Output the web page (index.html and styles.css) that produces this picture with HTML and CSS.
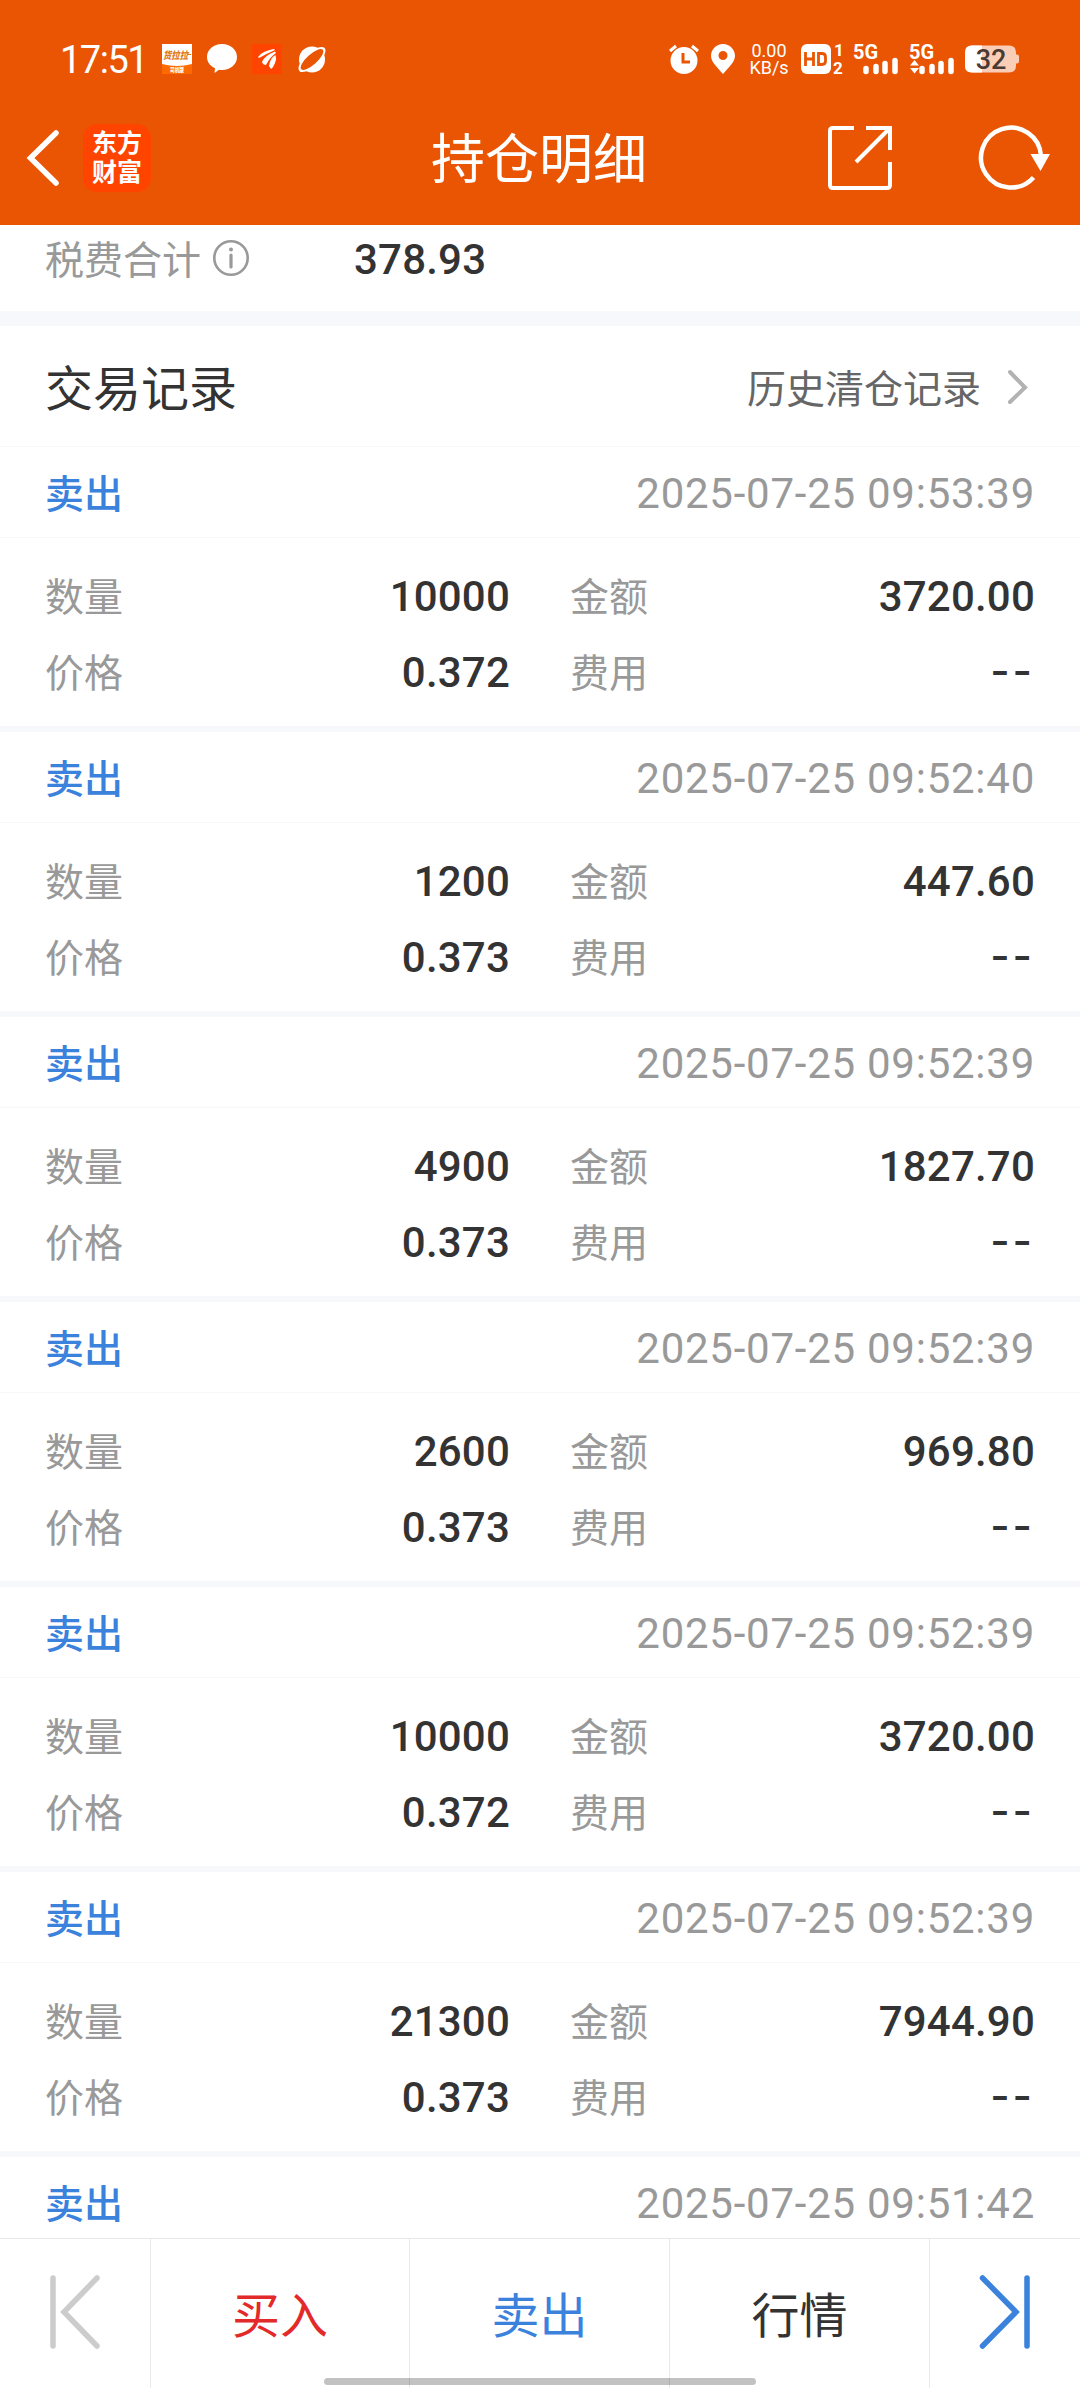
FILE: index.html
```html
<!DOCTYPE html>
<html lang="zh-CN">

<head>

<meta charset="utf-8">
<title>持仓明细</title>

<link rel="stylesheet" href="styles.css">

</head>

<body>

<div class="header">

<div class="status">
  <span class="clock">17:51</span>
  <svg class="app-icon" width="30" height="30" viewBox="0 0 30 30">
    <rect width="30" height="30" fill="#fff"/>
    <path d="M0 20Q15 24 30 20V30H0Z" fill="#ff6a00"/>
    <text x="1" y="15" class="tiny-brand" textLength="25" lengthAdjust="spacingAndGlyphs">货拉拉</text>
    <path d="M25 10.500H29" stroke="#e07a20" stroke-width="1"/>
    <text x="8" y="28" class="tiny-sub" textLength="14" lengthAdjust="spacingAndGlyphs">司机版</text>
  </svg>
  <svg class="app-icon" width="30" height="30" viewBox="0 0 30 30">
    <path d="M15 0C23.500 0 30 5.600 30 13S23.500 26 15 26Q13 26 12 25.700L7.500 29L8 24.200C3.200 22.200 0 18 0 13C0 5.600 6.500 0 15 0Z" fill="#fff"/>
  </svg>
  <svg class="app-icon" width="30" height="30" viewBox="0 0 30 30">
    <rect width="30" height="30" rx="2" fill="#ff4400"/>
    <path d="M6 13Q10 7 22 5L23 6Q14 10 7 14ZM10 18Q12 12 23 7.500L24 9Q18 13 14 21Q11 21 10 18ZM17 22Q18 14 23.500 11Q25 15 23 19Q21 24 19 25Z" fill="#fff"/>
  </svg>
  <svg class="app-icon" width="30" height="30" viewBox="0 0 30 30">
    <circle cx="15" cy="15.500" r="13" fill="#fff"/>
    <ellipse cx="15" cy="15.500" rx="17" ry="7" transform="rotate(-42 15 15.500)" fill="#fff"/>
    <ellipse cx="15" cy="15.500" rx="14.500" ry="5.200" transform="rotate(-42 15 15.500)" fill="#ea5504"/>
  </svg>

  <svg class="alarm" width="30" height="30" viewBox="0 0 30 30">
    <path d="M1 7L7 2M29 7L23 2" stroke="#fff" stroke-width="3"/>
    <circle cx="15" cy="16.500" r="13.500" fill="#fff"/>
    <path d="M14 9V18H21" fill="none" stroke="#ea5504" stroke-width="3"/>
  </svg>
  <svg class="pin" width="24" height="30" viewBox="0 0 24 30">
    <path fill-rule="evenodd" d="M12 0C18.600 0 24 5.200 24 11.800C24 18 18 23 12 30C6 23 0 18 0 11.800C0 5.200 5.400 0 12 0ZM12 7A4.500 4.500 0 1 0 12 16A4.500 4.500 0 1 0 12 7Z" fill="#fff"/>
  </svg>
  <div class="speed"><span>0.00</span><span>KB/s</span></div>
  <svg class="hd" width="43" height="30" viewBox="0 0 43 30">
    <rect width="30" height="30" rx="6" fill="#fff"/>
    <path d="M4.500 8V22M12.500 8V22M4.500 15H12.500M17.500 9.500V20.500H21Q24.500 20.500 24.500 17V13Q24.500 9.500 21 9.500Z" fill="none" stroke="#ea5504" stroke-width="2.800"/>
    <text x="33" y="12" class="sim">1</text>
    <text x="32" y="29.500" class="sim">2</text>
  </svg>
  <svg class="signal" width="46" height="30" viewBox="0 0 46 30">
    <text x="-1" y="14.500" class="net">5G</text>
    <path d="M12 24.500V27.500M22 22.500V27.500M31 19.500V27.500M41 16.500V27.500" stroke="#fff" stroke-width="5.500" stroke-linecap="round"/>
  </svg>
  <svg class="signal" width="46" height="30" viewBox="0 0 46 30">
    <text x="-1" y="14.500" class="net">5G</text>
    <path d="M0 21.500L4.500 16L9 21.500ZM0 24L4.500 29.500L9 24Z" fill="#fff"/>
    <path d="M12 24.500V27.500M22 22.500V27.500M31 19.500V27.500M41 16.500V27.500" stroke="#fff" stroke-width="5.500" stroke-linecap="round"/>
  </svg>
  <svg class="battery" width="55" height="28" viewBox="0 0 55 28">
    <path d="M7 0.500H44Q51 0.500 51 7.500V9.500H52Q54 9.500 54 11.500V16.500Q54 18.500 52 18.500H51V20.500Q51 27.500 44 27.500H7Q0 27.500 0 20.500V7.500Q0 0.500 7 0.500Z" fill="#f9cdb6"/>
    <path d="M7 0.500H17V27.500H7Q0 27.500 0 20.500V7.500Q0 0.500 7 0.500Z" fill="#fff"/>
    <text x="26" y="24" class="charge">32</text>
  </svg>
</div>

<div class="title-bar">
  <div class="title-left">
    <svg width="34" height="56" viewBox="0 0 34 56"><path d="M29 3L3.500 28L29 53" fill="none" stroke="#fff" stroke-width="5.500" stroke-linecap="round"/></svg>
    <div class="logo"><span>东方</span><span>财富</span></div>
  </div>
  <h1>持仓明细</h1>
  <div class="title-right">
    <svg width="64" height="64" viewBox="0 0 64 64" fill="none" stroke="#fff" stroke-width="4">
      <path d="M26 2H5Q2 2 2 5V59Q2 62 5 62H59Q62 62 62 59V36M38 2H62V24M62 2L28 36"/>
    </svg>
    <svg width="72" height="66" viewBox="0 0 72 66">
      <path d="M62 31A30 30 0 1 0 54.500 52.500" fill="none" stroke="#fff" stroke-width="4.500"/>
      <path d="M51.500 29H71L61.500 46Z" fill="#fff"/>
    </svg>
  </div>
</div>

</div>


<div class="summary">
  <span class="label">税费合计</span>
  <svg width="36" height="36" viewBox="0 0 36 36">
    <circle cx="18" cy="18" r="16.700" fill="none" stroke="#999" stroke-width="2.600"/>
    <circle cx="18" cy="9.500" r="2" fill="#999"/>
    <path d="M18 15V27" stroke="#999" stroke-width="3.200" stroke-linecap="round"/>
  </svg>
  <span class="value">378.93</span>
</div>

<div class="section-title">
  <h2>交易记录</h2>
  <span class="history">历史清仓记录</span>
  <svg width="22" height="36" viewBox="0 0 22 36"><path d="M3 4L18 19.500L3 34" fill="none" stroke="#b2b2b2" stroke-width="4" stroke-linecap="round"/></svg>
</div>


<div class="records">

<div class="record">
  <div class="record-head"><span class="side">卖出</span><span class="time">2025-07-25 09:53:39</span></div>
  <div class="record-body">
    <p><span class="label">数量</span><span class="value">10000</span></p>
    <p><span class="label">金额</span><span class="value">3720.00</span></p>
    <p><span class="label">价格</span><span class="value">0.372</span></p>
    <p><span class="label">费用</span><span class="value none">--</span></p>
  </div>
</div>

<div class="record">
  <div class="record-head"><span class="side">卖出</span><span class="time">2025-07-25 09:52:40</span></div>
  <div class="record-body">
    <p><span class="label">数量</span><span class="value">1200</span></p>
    <p><span class="label">金额</span><span class="value">447.60</span></p>
    <p><span class="label">价格</span><span class="value">0.373</span></p>
    <p><span class="label">费用</span><span class="value none">--</span></p>
  </div>
</div>

<div class="record">
  <div class="record-head"><span class="side">卖出</span><span class="time">2025-07-25 09:52:39</span></div>
  <div class="record-body">
    <p><span class="label">数量</span><span class="value">4900</span></p>
    <p><span class="label">金额</span><span class="value">1827.70</span></p>
    <p><span class="label">价格</span><span class="value">0.373</span></p>
    <p><span class="label">费用</span><span class="value none">--</span></p>
  </div>
</div>

<div class="record">
  <div class="record-head"><span class="side">卖出</span><span class="time">2025-07-25 09:52:39</span></div>
  <div class="record-body">
    <p><span class="label">数量</span><span class="value">2600</span></p>
    <p><span class="label">金额</span><span class="value">969.80</span></p>
    <p><span class="label">价格</span><span class="value">0.373</span></p>
    <p><span class="label">费用</span><span class="value none">--</span></p>
  </div>
</div>

<div class="record">
  <div class="record-head"><span class="side">卖出</span><span class="time">2025-07-25 09:52:39</span></div>
  <div class="record-body">
    <p><span class="label">数量</span><span class="value">10000</span></p>
    <p><span class="label">金额</span><span class="value">3720.00</span></p>
    <p><span class="label">价格</span><span class="value">0.372</span></p>
    <p><span class="label">费用</span><span class="value none">--</span></p>
  </div>
</div>

<div class="record">
  <div class="record-head"><span class="side">卖出</span><span class="time">2025-07-25 09:52:39</span></div>
  <div class="record-body">
    <p><span class="label">数量</span><span class="value">21300</span></p>
    <p><span class="label">金额</span><span class="value">7944.90</span></p>
    <p><span class="label">价格</span><span class="value">0.373</span></p>
    <p><span class="label">费用</span><span class="value none">--</span></p>
  </div>
</div>

<div class="record">
  <div class="record-head"><span class="side">卖出</span><span class="time">2025-07-25 09:51:42</span></div>
</div>

</div>


<div class="tabs">
  <div class="tab">
    <svg width="52" height="74" viewBox="0 0 52 74" fill="none" stroke="#ccc" stroke-width="5.500" stroke-linecap="round"><path d="M4 3V71M48 3L15 37L48 71"/></svg>
  </div>
  <div class="tab buy">买入</div>
  <div class="tab sell">卖出</div>
  <div class="tab">行情</div>
  <div class="tab">
    <svg width="52" height="74" viewBox="0 0 52 74" fill="none" stroke="#3a82dc" stroke-width="5.500" stroke-linecap="round"><path d="M48 3V71M3.500 3L37 37L3.500 71"/></svg>
  </div>
  <div class="home-bar"></div>
</div>

</body>

</html>
```

FILE: styles.css
```css
body {
   display: flex;
   flex-direction: column;
   width: 1080px;
   height: 2388px;
   margin: 0;
   overflow: hidden;
   background: #fff;
   color: #333;
   font-family: Roboto, "Noto Sans CJK SC", sans-serif;
   font-size: 39px; }

h1, h2, p {
   margin: 0;
   font-weight: 400; }

svg {
   display: block;
   flex: none;
   overflow: visible; }

.header {
   flex: none;
   height: 225px;
   background: #ea5504;
   color: #fff; }

.status {
   display: flex;
   align-items: center;
   height: 94px;
   padding: 12px 60px 0 60px; }

.clock {
   width: 102px;
   padding-top: 2px;
   font-size: 38px;
   letter-spacing: -1.5px; }

.app-icon {
   margin-right: 15px; }

.tiny-brand {
   font: italic 900 10px "Noto Sans CJK SC", sans-serif;
   fill: #e07a20; }

.tiny-sub {
   font: 900 6px "Noto Sans CJK SC", sans-serif;
   fill: #fff; }

.alarm {
   margin-left: auto; }

.pin {
   margin-left: 12px; }

.speed {
   display: flex;
   flex-direction: column;
   align-items: center;
   width: 38px;
   margin-left: 15px;
   font-size: 18px;
   line-height: 17px; }

.hd {
   margin-left: 13px; }

.sim {
   font: 700 17px Roboto, sans-serif;
   fill: #fff; }

.signal {
   margin-left: 10px; }

.net {
   font: 700 20px Roboto, sans-serif;
   fill: #fff; }

.battery {
   margin-left: 9px; }

.charge {
   font: 500 27px Roboto, sans-serif;
   text-anchor: middle;
   fill: #4a3a34; }

.title-bar {
   display: grid;
   grid-template-columns: 1fr auto 1fr;
   align-items: center;
   height: 66px;
   margin-top: 18px;
   padding: 0 29px 0 27px; }

.title-left, .title-right {
   display: flex;
   align-items: center; }

.title-right {
   justify-content: flex-end;
   gap: 87px; }

.title-bar h1 {
   padding-top: 6px;
   font-size: 54px;
   line-height: 60px; }

.logo {
   display: flex;
   flex-direction: column;
   align-items: center;
   justify-content: center;
   width: 68px;
   height: 68px;
   margin-left: 22px;
   border-radius: 14px;
   background: #ff4400;
   font-size: 25px;
   font-weight: 700;
   line-height: 29px; }

.summary {
   display: flex;
   flex: none;
   align-items: center;
   height: 66px;
   padding: 0 45px 20px;
   border-bottom: 15px solid #f6f8fb; }

.summary svg {
   width: 36px;
   margin-left: 12px; }

.summary .value {
   margin-left: 105px; }

.section-title {
   display: flex;
   flex: none;
   align-items: center;
   height: 120px;
   padding: 0 51px 0 45px;
   border-bottom: 1px solid #f6f7f9; }

.section-title h2 {
   flex: 1;
   padding-bottom: 3px; }

.section-title h2 {
   font-size: 48px; }

.history {
   margin-right: 26px;
   color: #666; }

.label {
   padding-bottom: 3px;
   color: #999; }

.value {
   padding-top: 2px;
   font-size: 42px;
   font-weight: 500;
   letter-spacing: 0.2px; }

.none {
   padding-bottom: 3px;
   font-family: Inter, sans-serif;
   letter-spacing: 3px; }

.records {
   flex: 1;
   min-height: 0;
   overflow: hidden; }

.record {
   border-bottom: 6px solid #f6f8fb; }

.record-head {
   display: flex;
   align-items: center;
   justify-content: space-between;
   height: 90px;
   padding: 0 45px;
   border-bottom: 1px solid #f6f7f9; }

.side {
   padding-bottom: 2px;
   color: #3a82dc;
   font-weight: 500; }

.time {
   padding-top: 3px;
   color: #999;
   font-size: 42px;
   letter-spacing: 0.75px; }

.record-body {
   display: grid;
   grid-template-columns: 465px 465px;
   grid-auto-rows: 76px;
   column-gap: 60px;
   height: 169px;
   padding: 19px 45px 0; }

.record-body p {
   display: flex;
   align-items: center;
   justify-content: space-between; }

.tabs {
   position: relative;
   display: grid;
   flex: none;
   grid-template-columns: 151px 259px 260px 260px 150px;
   height: 149px;
   border-top: 1px solid #e8e8e8;
   font-size: 48px; }

.tab {
   display: flex;
   align-items: center;
   justify-content: center;
   box-sizing: border-box;
   padding-bottom: 3px;
   border-right: 1px solid #e8e8e8; }

.tab:nth-child(5) {
   border-right: 0; }

.buy {
   color: #e32a2a; }

.sell {
   color: #3a82dc; }

/* system gesture bar, floats over the tabs */
.home-bar {
   position: absolute;
   bottom: 3px;
   left: 324px;
   width: 432px;
   height: 7px;
   border-radius: 4px;
   background: rgba(0, 0, 0, 0.24); }
```
